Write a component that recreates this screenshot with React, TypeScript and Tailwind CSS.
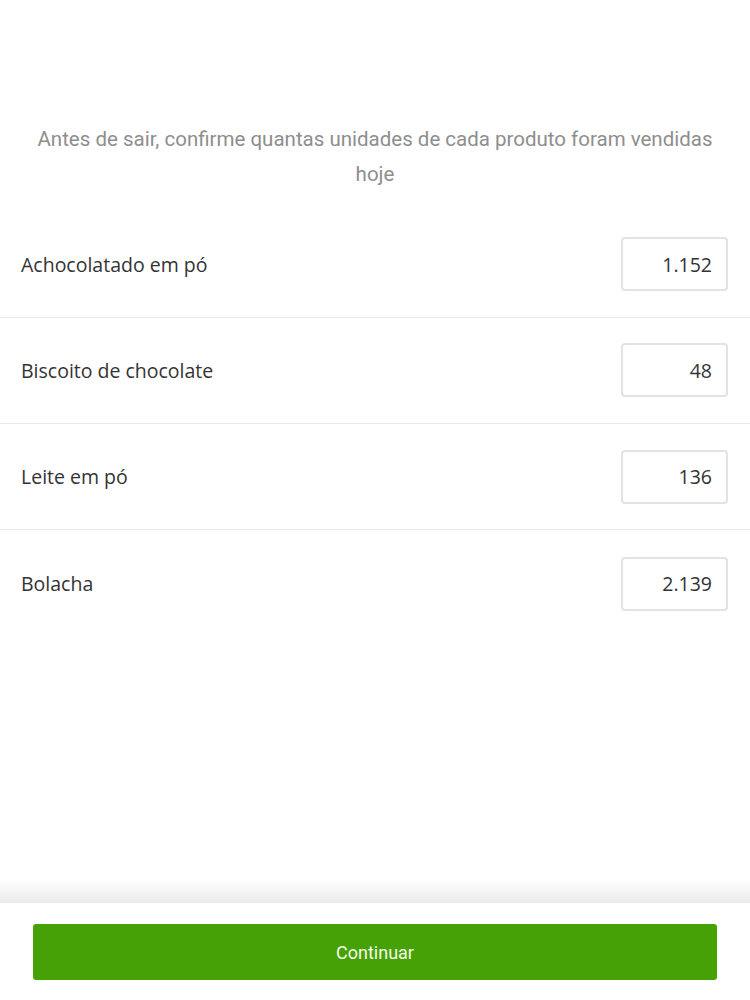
const products = [
  { name: 'Achocolatado em pó', qty: '1.152' },
  { name: 'Biscoito de chocolate', qty: '48' },
  { name: 'Leite em pó', qty: '136' },
  { name: 'Bolacha', qty: '2.139' },
];

export default function App() {
  return (
    <div className="min-h-screen flex flex-col bg-white">
      {/* Content */}
      <main className="flex-1 pt-[122px]">
        <p className="px-[32px] text-center font-['Roboto',sans-serif] text-[20.5px] leading-[35px] text-[#8e8e8e]">
          Antes de sair, confirme quantas unidades de cada produto foram vendidas hoje
        </p>

        <ul className="mt-[19.5px]">
          {products.map((p, i) => (
            <li
              key={p.name}
              className={`flex items-center justify-between h-[106.3px] pl-[21px] pr-[22px] ${
                i < products.length - 1 ? 'border-b border-[#e6e6e6]' : ''
              }`}
            >
              <span className="font-['Open_Sans',sans-serif] text-[19.5px] text-[#333]">{p.name}</span>
              <input
                defaultValue={p.qty}
                className="w-[107px] h-[54px] rounded-[4px] border-2 border-[#e3e3e3] pr-[14px] text-right font-['Open_Sans',sans-serif] text-[19.5px] text-[#333] outline-none"
              />
            </li>
          ))}
        </ul>
      </main>

      {/* Shadow above footer */}
      <div className="h-[24px] bg-gradient-to-b from-white to-[#ebebee]" />

      {/* Footer */}
      <footer className="h-[97px] pt-[21px] px-[33px]">
        <button className="w-full h-[56px] rounded-[3px] bg-[#46a106] font-['Roboto',sans-serif] text-[18px] text-[#f2ffe4]">
          Continuar
        </button>
      </footer>
    </div>
  );
}
